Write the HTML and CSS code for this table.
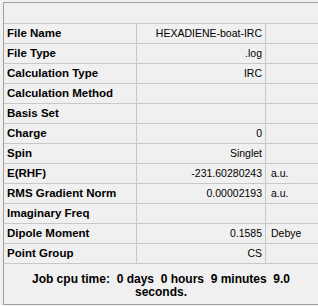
FILE: index.html
```html
<!DOCTYPE html>
<html lang="en">
<head>
    <meta charset="UTF-8">
    <title>Summary</title>
    <link rel="stylesheet" href="styles.css">
</head>
<body>
    <div class="summary-panel">
        <div class="panel-header"></div>
        <div class="props-grid">
            <div class="prop-name">File Name</div>
            <div class="prop-value">HEXADIENE-boat-IRC</div>
            <div class="prop-unit"></div>

            <div class="prop-name">File Type</div>
            <div class="prop-value">.log</div>
            <div class="prop-unit"></div>

            <div class="prop-name">Calculation Type</div>
            <div class="prop-value">IRC</div>
            <div class="prop-unit"></div>

            <div class="prop-name">Calculation Method</div>
            <div class="prop-value"></div>
            <div class="prop-unit"></div>

            <div class="prop-name">Basis Set</div>
            <div class="prop-value"></div>
            <div class="prop-unit"></div>

            <div class="prop-name">Charge</div>
            <div class="prop-value">0</div>
            <div class="prop-unit"></div>

            <div class="prop-name">Spin</div>
            <div class="prop-value">Singlet</div>
            <div class="prop-unit"></div>

            <div class="prop-name">E(RHF)</div>
            <div class="prop-value">-231.60280243</div>
            <div class="prop-unit">a.u.</div>

            <div class="prop-name">RMS Gradient Norm</div>
            <div class="prop-value">0.00002193</div>
            <div class="prop-unit">a.u.</div>

            <div class="prop-name">Imaginary Freq</div>
            <div class="prop-value"></div>
            <div class="prop-unit"></div>

            <div class="prop-name">Dipole Moment</div>
            <div class="prop-value">0.1585</div>
            <div class="prop-unit">Debye</div>

            <div class="prop-name">Point Group</div>
            <div class="prop-value">CS</div>
            <div class="prop-unit"></div>
        </div>
        <div class="cpu-time">Job cpu time:&nbsp; 0 days&nbsp; 0 hours&nbsp; 9 minutes&nbsp; 9.0<br>seconds.</div>
    </div>
</body>
</html>
```

FILE: styles.css
```css
/* Base */
body, html {
    margin: 0;
    padding: 0;
    background-color: #f0f0f0;
    font-family: 'Liberation Sans', Arial, sans-serif;
    font-size: 11px;
    color: #000;
}

/* Outer panel */
.summary-panel {
    margin: 2px 0 0 3px;
    border-top: 1px solid #a0a0a0;
    border-left: 1px solid #a0a0a0;
    border-bottom: 1px solid #a0a0a0;
}

.panel-header {
    height: 20px;
    border-bottom: 1px solid #c8c8c8;
}

/* Property rows */
.props-grid {
    display: grid;
    grid-template-columns: 133px 129px 1fr;
    grid-auto-rows: 20px;
}

.props-grid > div {
    box-sizing: border-box;
    border-bottom: 1px solid #c8c8c8;
    line-height: 19px;
    white-space: nowrap;
    overflow: hidden;
}

.prop-name {
    font-size: 11.5px;
    font-weight: bold;
    padding-left: 3px;
    border-right: 1px solid #c8c8c8;
}

.prop-value {
    font-size: 10.5px;
    text-align: right;
    padding-right: 3px;
    border-right: 1px solid #c8c8c8;
}

.prop-unit {
    font-size: 10.5px;
    padding-left: 5px;
}

/* Footer */
.cpu-time {
    height: 40px;
    box-sizing: border-box;
    padding-top: 9px;
    font-size: 12px;
    font-weight: bold;
    line-height: 13px;
    text-align: center;
}
```
